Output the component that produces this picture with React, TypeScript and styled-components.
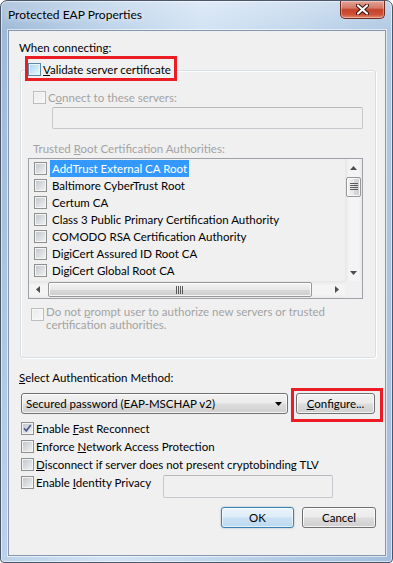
import React, { FC } from 'react';
import styled, { createGlobalStyle, css } from 'styled-components';

const GlobalStyle = createGlobalStyle`
  html, body {
    margin: 0;
    padding: 0;
    background: #ffffff;
  }
  body {
    font-family: Lato, "Liberation Sans", sans-serif;
    font-size: 11.5px;
    color: #000000;
  }
`;

type Look = 'normal' | 'disabled' | 'hot';

const Window = styled.div`
  position: relative;
  width: 393px;
  height: 563px;
  box-sizing: border-box;
  display: flex;
  flex-direction: column;
  padding: 0 6px 6px 7px;
  border: 1px solid #4b5768;
  border-radius: 7px 7px 4px 4px;
  background:
    linear-gradient(180deg, rgba(255, 255, 255, 0.25) 0%, rgba(255, 255, 255, 0) 30px),
    linear-gradient(100deg, #9cb8d6 0%, #bcd3ea 22%, #d3e3f3 42%, #c3d8ed 62%, #afc8e3 82%, #a4bfdd 100%);
  box-shadow: inset 0 0 0 1px rgba(255, 255, 255, 0.55);
`;

const TitleBar = styled.div`
  display: flex;
  justify-content: space-between;
  align-items: flex-start;
  height: 29px;
  margin: 0 -6px 0 -7px;
  padding-left: 7px;
`;

const Caption = styled.span`
  margin-top: 6px;
  line-height: 16px;
  font-size: 12px;
  color: #000000;
  text-shadow: 0 0 6px rgba(255, 255, 255, 0.9);
`;

const CloseButton = styled.div`
  width: 45px;
  height: 18px;
  margin-right: 7px;
  box-sizing: border-box;
  display: flex;
  align-items: center;
  justify-content: center;
  border: 1px solid #6e2a20;
  border-top: none;
  border-radius: 0 0 5px 5px;
  background: linear-gradient(180deg, #e3a597 0%, #d57a68 40%, #c4422a 52%, #cf5238 80%, #e58a6e 100%);
  box-shadow: inset 0 0 0 1px rgba(255, 255, 255, 0.35);
`;

const Client = styled.div`
  flex: 1;
  display: flex;
  flex-direction: column;
  background: #f0f0f0;
  border: 1px solid #8497ae;
  box-shadow: 0 0 0 1px rgba(255, 255, 255, 0.6);
`;

const SectionLabel = styled.div<{ $top: number }>`
  margin: ${({ $top }) => $top}px 0 0 10px;
  line-height: 16px;
`;

const Group = styled.div`
  margin: 14px 0 0 11px;
  width: 356px;
  height: 288px;
  box-sizing: border-box;
  display: flex;
  flex-direction: column;
  align-items: flex-start;
  border: 1px solid #d5dfe5;
  border-radius: 3px;
  box-shadow: inset 1px 1px 0 #ffffff, 1px 1px 0 #ffffff;
`;

const Legend = styled.label`
  display: flex;
  align-items: center;
  gap: 2px;
  height: 16px;
  margin: -10px 0 0 6px;
  padding: 0 2px 0 1px;
  background: #f0f0f0;
`;

const Row = styled.label<{ $left: number; $top: number }>`
  display: flex;
  align-items: center;
  gap: 2px;
  height: 16px;
  margin: ${({ $top, $left }) => `${$top}px 0 0 ${$left}px`};
`;

const WrapRow = styled.label`
  display: flex;
  align-items: flex-start;
  gap: 2px;
  margin: 6px 0 0 10px;

  & > span:first-child {
    margin-top: 3px;
  }
`;

const Text = styled.span<{ $dim?: boolean }>`
  color: ${({ $dim }) => ($dim ? '#a3a3a3' : '#000000')};
  white-space: nowrap;
`;

const WrapText = styled.span`
  display: flex;
  flex-direction: column;
  color: #a3a3a3;
  line-height: 13px;
  white-space: nowrap;
`;

const Box = styled.span<{ $look: Look }>`
  position: relative;
  flex: none;
  width: 13px;
  height: 13px;
  box-sizing: border-box;
  border: 1px solid #8e8f8f;
  background: #f4f4f4;

  &::before {
    content: '';
    position: absolute;
    inset: 1px;
    background: linear-gradient(135deg, #c4c8cd 0%, #eef0f1 100%);
  }

  svg {
    position: absolute;
    left: 0;
    top: 0;
    z-index: 1;
  }

  ${({ $look }) =>
    $look === 'disabled' &&
    css`
      border-color: #bdbdbd;
      background: #f7f7f7;
      &::before {
        background: linear-gradient(135deg, #ececec 0%, #f7f7f7 100%);
      }
    `}

  ${({ $look }) =>
    $look === 'hot' &&
    css`
      border-color: #5b87a8;
      background: #e6f4fc;
      &::before {
        background: linear-gradient(135deg, #a9d6f3 0%, #e9f6fd 100%);
      }
    `}
`;

const CheckBox: FC<{ look?: Look; checked?: boolean }> = ({ look = 'normal', checked }) => (
  <Box $look={look}>
    {checked && (
      <svg width="11" height="11" viewBox="0 0 11 11">
        <polyline points="2,5.2 4.3,7.8 8.8,2" fill="none" stroke="#4a5d8c" strokeWidth="1.7" />
      </svg>
    )}
  </Box>
);

const TextField = styled.div<{ $w: number; $h: number }>`
  flex: none;
  width: ${({ $w }) => $w}px;
  height: ${({ $h }) => $h}px;
  box-sizing: border-box;
  border: 1px solid #c5c8cc;
  border-top-color: #b5b9bd;
  border-radius: 2px;
  background: #f0f0f0;
`;

const ServerField = styled(TextField)`
  margin: 2px 0 0 31px;
`;

const GroupCaption = styled.div`
  margin: 12px 0 0 12px;
  line-height: 16px;
  color: #a3a3a3;
`;

const ListBox = styled.div`
  margin: 1px 0 0 7px;
  width: 335px;
  height: 141px;
  box-sizing: border-box;
  border: 1px solid #9ea2a8;
  background: #f0f0f0;
  display: grid;
  grid-template-columns: 1fr 17px;
  grid-template-rows: 1fr 17px;
`;

const ListItems = styled.div`
  padding-top: 1px;
  overflow: hidden;
`;

const ListRow = styled.div`
  display: flex;
  align-items: center;
  height: 17px;
  padding-left: 5px;
`;

const ItemText = styled.span<{ $selected?: boolean }>`
  margin-left: 3px;
  padding: 0 2px;
  line-height: 17px;
  white-space: nowrap;
  color: ${({ $selected }) => ($selected ? '#ffffff' : '#000000')};
  background: ${({ $selected }) => ($selected ? '#3399ff' : 'transparent')};
`;

const VTrack = styled.div`
  display: flex;
  flex-direction: column;
  align-items: center;
  background: linear-gradient(90deg, #e6e6e6 0%, #f4f4f4 25%, #f4f4f4 80%, #e9e9e9 100%);
`;

const HTrack = styled.div`
  display: flex;
  align-items: center;
  background: linear-gradient(180deg, #e6e6e6 0%, #f4f4f4 25%, #f4f4f4 80%, #e9e9e9 100%);
`;

const ArrowCell = styled.div<{ $end?: boolean }>`
  flex: none;
  width: 17px;
  height: 17px;
  display: flex;
  align-items: center;
  justify-content: center;
  ${({ $end }) => $end && 'margin-top: auto; margin-left: auto;'}
`;

const Thumb = styled.div<{ $vertical?: boolean }>`
  flex: none;
  box-sizing: border-box;
  display: flex;
  align-items: center;
  justify-content: center;
  border: 1px solid #979797;
  border-radius: 2px;
  box-shadow: inset 0 0 0 1px rgba(255, 255, 255, 0.8);
  ${({ $vertical }) =>
    $vertical
      ? css`
          width: 15px;
          height: 20px;
          margin-top: 1px;
          background: linear-gradient(90deg, #f3f3f3 0%, #e8e8e8 50%, #d8d8d8 51%, #cfcfcf 100%);
        `
      : css`
          width: 264px;
          height: 15px;
          margin-left: 2px;
          background: linear-gradient(180deg, #f3f3f3 0%, #e8e8e8 50%, #d8d8d8 51%, #cfcfcf 100%);
        `}
`;

const Corner = styled.div`
  background: #f0f0f0;
`;

const ComboRow = styled.div`
  display: flex;
  align-items: center;
  gap: 8px;
  margin: 7px 0 0 12px;
`;

const buttonFace = css`
  box-sizing: border-box;
  height: 21px;
  border: 1px solid #707070;
  border-radius: 3px;
  background: linear-gradient(180deg, #f2f2f2 0%, #ebebeb 48%, #dddddd 52%, #cfcfcf 100%);
  box-shadow: inset 0 0 0 1px rgba(255, 255, 255, 0.75);
`;

const Combo = styled.div`
  ${buttonFace};
  width: 267px;
  display: flex;
  align-items: center;
  justify-content: space-between;
  padding: 0 5px 0 4px;
`;

const PushButton = styled.div<{ $w: number; $default?: boolean }>`
  ${buttonFace};
  width: ${({ $w }) => $w}px;
  display: flex;
  align-items: center;
  justify-content: center;
  ${({ $default }) =>
    $default &&
    css`
      border-color: #3c7fb1;
      background: linear-gradient(180deg, #eaf4fb 0%, #dcecf8 48%, #c9e1f4 52%, #bcd9ef 100%);
      box-shadow: inset 0 0 0 1px rgba(255, 255, 255, 0.6), 0 0 2px rgba(60, 127, 177, 0.5);
    `}
`;

const OptionList = styled.div`
  display: flex;
  flex-direction: column;
  margin: 6px 0 0 12px;
`;

const OptionRow = styled.label`
  display: flex;
  align-items: center;
  gap: 2px;
  height: 17.7px;
`;

const IdentityRow = styled.div`
  display: flex;
  align-items: flex-start;
`;

const IdentityLabel = styled.label`
  display: flex;
  align-items: center;
  gap: 2px;
  width: 142px;
  height: 18px;
`;

const IdentityField = styled(TextField)`
  margin-top: 2px;
`;

const ButtonRow = styled.div`
  display: flex;
  justify-content: flex-end;
  gap: 8px;
  margin: 9px 9px 0 0;
`;

const Callout = styled.div<{ $x: number; $y: number; $w: number; $h: number }>`
  position: absolute;
  left: ${({ $x }) => $x}px;
  top: ${({ $y }) => $y}px;
  width: ${({ $w }) => $w}px;
  height: ${({ $h }) => $h}px;
  box-sizing: border-box;
  border: 3px solid #ec1c24;
  pointer-events: none;
`;

const Tri: FC<{ dir: 'up' | 'down' | 'left' | 'right'; color?: string }> = ({ dir, color = '#4d4d4d' }) => {
  const pts = {
    up: '0,4 7,4 3.5,0',
    down: '0,0 7,0 3.5,4',
    left: '4,0 4,7 0,3.5',
    right: '0,0 0,7 4,3.5',
  }[dir];
  const vertical = dir === 'up' || dir === 'down';
  return (
    <svg width={vertical ? 7 : 4} height={vertical ? 4 : 7} viewBox={vertical ? '0 0 7 4' : '0 0 4 7'}>
      <polygon points={pts} fill={color} />
    </svg>
  );
};

const Grip: FC<{ vertical?: boolean }> = ({ vertical }) =>
  vertical ? (
    <svg width="8" height="8" viewBox="0 0 8 8">
      {[0, 2, 4, 6].map((y) => (
        <rect key={y} x="0" y={y} width="8" height="1" fill="#5a5a5a" />
      ))}
    </svg>
  ) : (
    <svg width="8" height="8" viewBox="0 0 8 8">
      {[0, 2, 4, 6].map((x) => (
        <rect key={x} x={x} y="0" width="1" height="8" fill="#5a5a5a" />
      ))}
    </svg>
  );

const authorities = [
  'AddTrust External CA Root',
  'Baltimore CyberTrust Root',
  'Certum CA',
  'Class 3 Public Primary Certification Authority',
  'COMODO RSA Certification Authority',
  'DigiCert Assured ID Root CA',
  'DigiCert Global Root CA',
];

const App: FC = () => (
  <>
    <GlobalStyle />
    <Window>
      <TitleBar>
        <Caption>Protected EAP Properties</Caption>
        <CloseButton>
          <svg width="13" height="11" viewBox="0 0 13 11">
            <path d="M2 1.5 L11 9.5 M11 1.5 L2 9.5" stroke="#3b1510" strokeWidth="4.2" strokeLinecap="round" />
            <path d="M2 1.5 L11 9.5 M11 1.5 L2 9.5" stroke="#ffffff" strokeWidth="2.2" strokeLinecap="round" />
          </svg>
        </CloseButton>
      </TitleBar>

      <Client>
        <SectionLabel $top={9}>When connecting:</SectionLabel>

        <Group>
          <Legend>
            <CheckBox look="hot" />
            <Text>
              <u>V</u>alidate server certificate
            </Text>
          </Legend>

          <Row $left={12} $top={12}>
            <CheckBox look="disabled" />
            <Text $dim>
              C<u>o</u>nnect to these servers:
            </Text>
          </Row>
          <ServerField $w={311} $h={22} />

          <GroupCaption>
            Trusted <u>R</u>oot Certification Authorities:
          </GroupCaption>
          <ListBox>
            <ListItems>
              {authorities.map((name, i) => (
                <ListRow key={name}>
                  <CheckBox />
                  <ItemText $selected={i === 0}>{name}</ItemText>
                </ListRow>
              ))}
            </ListItems>
            <VTrack>
              <ArrowCell>
                <Tri dir="up" />
              </ArrowCell>
              <Thumb $vertical>
                <Grip vertical />
              </Thumb>
              <ArrowCell $end>
                <Tri dir="down" />
              </ArrowCell>
            </VTrack>
            <HTrack>
              <ArrowCell>
                <Tri dir="left" />
              </ArrowCell>
              <Thumb>
                <Grip />
              </Thumb>
              <ArrowCell $end>
                <Tri dir="right" />
              </ArrowCell>
            </HTrack>
            <Corner />
          </ListBox>

          <WrapRow>
            <CheckBox look="disabled" />
            <WrapText>
              <span>
                Do not <u>p</u>rompt user to authorize new servers or trusted
              </span>
              <span>certification authorities.</span>
            </WrapText>
          </WrapRow>
        </Group>

        <SectionLabel $top={12}>
          <u>S</u>elect Authentication Method:
        </SectionLabel>
        <ComboRow>
          <Combo>
            <span>Secured password (EAP-MSCHAP v2)</span>
            <Tri dir="down" color="#000000" />
          </Combo>
          <PushButton $w={79}>
            <span>
              <u>C</u>onfigure...
            </span>
          </PushButton>
        </ComboRow>

        <OptionList>
          <OptionRow>
            <CheckBox checked />
            <Text>
              Enable <u>F</u>ast Reconnect
            </Text>
          </OptionRow>
          <OptionRow>
            <CheckBox />
            <Text>
              Enforce <u>N</u>etwork Access Protection
            </Text>
          </OptionRow>
          <OptionRow>
            <CheckBox />
            <Text>
              <u>D</u>isconnect if server does not present cryptobinding TLV
            </Text>
          </OptionRow>
          <IdentityRow>
            <IdentityLabel>
              <CheckBox />
              <Text>
                Enable <u>I</u>dentity Privacy
              </Text>
            </IdentityLabel>
            <IdentityField $w={170} $h={23} />
          </IdentityRow>
        </OptionList>

        <ButtonRow>
          <PushButton $w={73} $default>
            OK
          </PushButton>
          <PushButton $w={74}>Cancel</PushButton>
        </ButtonRow>
      </Client>

      <Callout $x={24} $y={55} $w={152} $h={25} />
      <Callout $x={290} $y={387} $w={92} $h={34} />
    </Window>
  </>
);

export default App;
